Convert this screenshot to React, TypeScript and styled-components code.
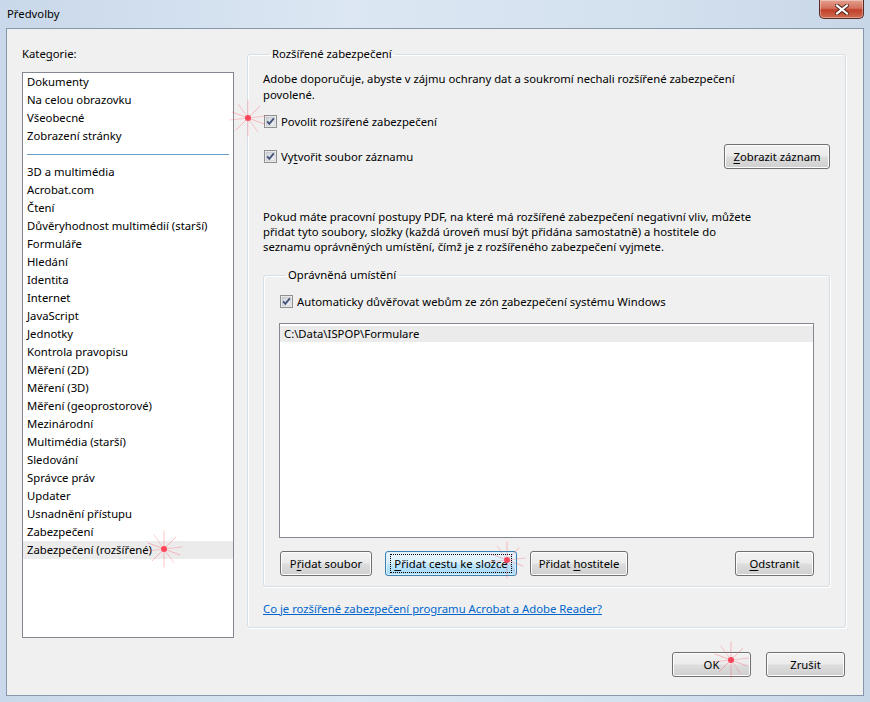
import React, { FC } from "react";
import styled, { createGlobalStyle, css } from "styled-components";

const GlobalStyle = createGlobalStyle`
  html, body {
    margin: 0;
    padding: 0;
    background: #cfdcea;
  }
  body {
    font-family: "Segoe UI", "Noto Sans", "Liberation Sans", sans-serif;
    font-size: 11.3px;
    color: #000;
  }
`;

const Window = styled.div`
  position: relative;
  width: 870px;
  height: 702px;
  box-sizing: border-box;
  display: flex;
  flex-direction: column;
  background: linear-gradient(90deg, #c9d8ea 0%, #dce7f3 40%, #d3e0ee 75%, #c8d7e8 100%);
  overflow: hidden;
`;

const TitleBar = styled.div`
  height: 28px;
  display: flex;
  justify-content: space-between;
  align-items: flex-start;
  flex-shrink: 0;
`;

const Title = styled.div`
  padding: 6px 0 0 7px;
  line-height: 16px;
  color: #000;
`;

const CloseButton = styled.div`
  width: 45px;
  height: 19px;
  margin-right: 6px;
  box-sizing: border-box;
  border: 1px solid #5a2a24;
  border-top: none;
  border-radius: 0 0 5px 5px;
  background: linear-gradient(180deg, #e4a08f 0%, #d2715c 45%, #c2412b 55%, #cf6a50 100%);
  box-shadow: inset 0 0 0 1px rgba(255, 255, 255, 0.35);
  display: flex;
  align-items: center;
  justify-content: center;
`;

const Client = styled.div`
  flex: 1;
  margin: 0 6px 6px 6px;
  box-sizing: border-box;
  background: #f0f0f0;
  border: 1px solid #8797ab;
  padding: 17px 17px 0 15px;
  display: flex;
  flex-direction: column;
`;

const MainRow = styled.div`
  display: flex;
  gap: 13px;
  height: 592px;
`;

const LeftColumn = styled.div`
  width: 212px;
  display: flex;
  flex-direction: column;
`;

const Label = styled.div`
  line-height: 16px;
  height: 16px;
  margin-bottom: 10px;
`;

const Mn = styled.span`
  text-decoration: underline;
  text-underline-offset: 2px;
`;

const ListBox = styled.div<{ $height: number }>`
  box-sizing: border-box;
  height: ${(p) => p.$height}px;
  background: #fff;
  border: 1px solid #828790;
  overflow: hidden;
`;

const ListItem = styled.div<{ $selected?: boolean; $h?: number }>`
  height: ${(p) => p.$h ?? 18}px;
  line-height: ${(p) => p.$h ?? 18}px;
  padding-left: 4px;
  white-space: nowrap;
  ${(p) =>
    p.$selected &&
    css`
      background: #ebebeb;
    `}
`;

const Separator = styled.div`
  height: 18px;
  display: flex;
  align-items: center;
  padding: 0 4px;
  &::after {
    content: "";
    flex: 1;
    height: 1px;
    background: #6a9dc8;
  }
`;

const GroupBox = styled.fieldset<{ $pad: string }>`
  margin: 0;
  box-sizing: border-box;
  border: 1px solid #d5dfe5;
  border-radius: 3px;
  box-shadow: inset 1px 1px 0 #fff, 1px 1px 0 #fff;
  padding: ${(p) => p.$pad};
  min-width: 0;
  display: flex;
  flex-direction: column;
`;

const OuterGroup = styled(GroupBox)`
  flex: 1;
  height: 582px;
`;

const Legend = styled.legend`
  padding: 0 3px;
  margin-left: 6px;
  line-height: 16px;
  height: 16px;
`;

const Paragraph = styled.p<{ $lh: number; $mt: number }>`
  margin: ${(p) => p.$mt}px 0 0 0;
  line-height: ${(p) => p.$lh}px;
`;

const CheckRow = styled.label<{ $mt: number }>`
  display: flex;
  align-items: center;
  gap: 4px;
  height: 16px;
  margin-top: ${(p) => p.$mt}px;
  padding-left: 1px;
  white-space: nowrap;
`;

const SplitRow = styled.div<{ $mt: number }>`
  display: flex;
  align-items: center;
  justify-content: space-between;
  height: 25px;
  margin-top: ${(p) => p.$mt}px;
`;

const Button = styled.div<{ $w: number; $focused?: boolean }>`
  width: ${(p) => p.$w}px;
  height: 25px;
  box-sizing: border-box;
  border: 1px solid #707070;
  border-radius: 3px;
  background: linear-gradient(180deg, #f2f2f2 0%, #ebebeb 48%, #dddddd 52%, #cfcfcf 100%);
  box-shadow: inset 0 0 0 1px #fcfcfc;
  display: flex;
  align-items: center;
  justify-content: center;
  white-space: nowrap;
  flex-shrink: 0;
  ${(p) =>
    p.$focused &&
    css`
      border-color: #3c7fb1;
      background: linear-gradient(180deg, #eaf6fd 0%, #d9f0fc 48%, #bee6fd 52%, #a7d9f5 100%);
      box-shadow: inset 0 0 0 1px #dcf1fc;
    `}
`;

const FocusRect = styled.span`
  padding: 1px 3px;
  outline: 1px dotted #000;
  outline-offset: 0;
`;

const InnerGroup = styled(GroupBox)`
  margin-top: 13px;
  height: 321px;
`;

const PathList = styled(ListBox)`
  margin-top: 14px;
  padding-top: 2px;
`;

const ButtonRow = styled.div`
  display: flex;
  align-items: center;
  gap: 13px;
  margin-top: 13px;
  padding-left: 1px;
`;

const Spacer = styled.div`
  flex: 1;
`;

const Link = styled.a`
  display: block;
  margin-top: 14px;
  line-height: 16px;
  color: #0066cc;
  text-decoration: underline;
  cursor: pointer;
`;

const Footer = styled.div`
  display: flex;
  justify-content: flex-end;
  gap: 15px;
  margin-top: 14px;
  padding-right: 1px;
`;

const Sparkle = styled.svg<{ $x: number; $y: number }>`
  position: absolute;
  left: ${(p) => p.$x - 20}px;
  top: ${(p) => p.$y - 20}px;
  width: 40px;
  height: 40px;
  pointer-events: none;
`;

const CheckBox: FC = () => (
  <svg width="13" height="13" viewBox="0 0 13 13">
    <defs>
      <linearGradient id="cbg" x1="0" y1="0" x2="1" y2="1">
        <stop offset="0" stopColor="#cbcfd5" />
        <stop offset="1" stopColor="#f6f6f6" />
      </linearGradient>
    </defs>
    <rect x="0.5" y="0.5" width="12" height="12" fill="#fff" stroke="#8e8f8f" />
    <rect x="2" y="2" width="9" height="9" fill="url(#cbg)" stroke="#aeb3b9" strokeWidth="0.6" />
    <path d="M3.2 6.4 L5.3 8.8 L9.8 3.4" fill="none" stroke="#3f5178" strokeWidth="1.8" />
  </svg>
);

const Star: FC<{ x: number; y: number }> = ({ x, y }) => (
  <Sparkle $x={x} $y={y} viewBox="0 0 40 40">
    <g stroke="#ff5060" strokeLinecap="round">
      <line x1="20" y1="2" x2="20" y2="38" strokeWidth="0.8" strokeOpacity="0.45" />
      <line x1="4" y1="14" x2="36" y2="26" strokeWidth="0.8" strokeOpacity="0.45" />
      <line x1="8" y1="32" x2="32" y2="8" strokeWidth="0.8" strokeOpacity="0.45" />
      <line x1="10" y1="6" x2="30" y2="34" strokeWidth="0.8" strokeOpacity="0.35" />
      <line x1="2" y1="22" x2="38" y2="18" strokeWidth="0.8" strokeOpacity="0.35" />
    </g>
    <circle cx="20" cy="20" r="3" fill="#ff3048" fillOpacity="0.85" />
  </Sparkle>
);

const topCategories = ["Dokumenty", "Na celou obrazovku", "Všeobecné", "Zobrazení stránky"];

const categories = [
  "3D a multimédia",
  "Acrobat.com",
  "Čtení",
  "Důvěryhodnost multimédií (starší)",
  "Formuláře",
  "Hledání",
  "Identita",
  "Internet",
  "JavaScript",
  "Jednotky",
  "Kontrola pravopisu",
  "Měření (2D)",
  "Měření (3D)",
  "Měření (geoprostorové)",
  "Mezinárodní",
  "Multimédia (starší)",
  "Sledování",
  "Správce práv",
  "Updater",
  "Usnadnění přístupu",
  "Zabezpečení",
  "Zabezpečení (rozšířené)",
];

const App: FC = () => {
  return (
    <>
      <GlobalStyle />
      <Window>
        <TitleBar>
          <Title>Předvolby</Title>
          <CloseButton>
            <svg width="14" height="11" viewBox="0 0 14 11">
              <path
                d="M2 1.5 L12 9.5 M12 1.5 L2 9.5"
                stroke="#4a2018"
                strokeWidth="4"
                strokeLinecap="square"
              />
              <path
                d="M2 1.5 L12 9.5 M12 1.5 L2 9.5"
                stroke="#fff"
                strokeWidth="2.2"
                strokeLinecap="square"
              />
            </svg>
          </CloseButton>
        </TitleBar>
        <Client>
          <MainRow>
            <LeftColumn>
              <Label>
                Kate<Mn>g</Mn>orie:
              </Label>
              <ListBox $height={566}>
                {topCategories.map((c) => (
                  <ListItem key={c}>{c}</ListItem>
                ))}
                <Separator />
                {categories.map((c, i) => (
                  <ListItem key={c} $selected={i === categories.length - 1}>
                    {c}
                  </ListItem>
                ))}
              </ListBox>
            </LeftColumn>

            <OuterGroup $pad="9px 15px 10px 15px">
              <Legend>Rozšířené zabezpečení</Legend>
              <Paragraph $lh={16} $mt={0}>
                Adobe doporučuje, abyste v zájmu ochrany dat a soukromí nechali rozšířené zabezpečení
                <br />
                povolené.
              </Paragraph>
              <CheckRow $mt={11}>
                <CheckBox />
                <span>Povolit rozšířené zabezpečení</span>
              </CheckRow>
              <SplitRow $mt={15}>
                <CheckRow $mt={0}>
                  <CheckBox />
                  <span>
                    Vy<Mn>t</Mn>vořit soubor záznamu
                  </span>
                </CheckRow>
                <Button $w={106}>
                  <span>
                    <Mn>Z</Mn>obrazit záznam
                  </span>
                </Button>
              </SplitRow>
              <Paragraph $lh={15} $mt={40}>
                Pokud máte pracovní postupy PDF, na které má rozšířené zabezpečení negativní vliv, můžete
                <br />
                přidat tyto soubory, složky (každá úroveň musí být přidána samostatně) a hostitele do
                <br />
                seznamu oprávněných umístění, čímž je z rozšířeného zabezpečení vyjmete.
              </Paragraph>

              <InnerGroup $pad="10px 15px 10px 15px">
                <Legend>Oprávněná umístění</Legend>
                <CheckRow $mt={0}>
                  <CheckBox />
                  <span>
                    Automaticky důvěřovat webům ze zón <Mn>z</Mn>abezpečení systému Windows
                  </span>
                </CheckRow>
                <PathList $height={215}>
                  <ListItem $selected $h={16}>
                    C:\Data\ISPOP\Formulare
                  </ListItem>
                </PathList>
                <ButtonRow>
                  <Button $w={92}>
                    <span>
                      P<Mn>ř</Mn>idat soubor
                    </span>
                  </Button>
                  <Button $w={132} $focused>
                    <FocusRect>
                      <Mn>P</Mn>řidat cestu ke složce
                    </FocusRect>
                  </Button>
                  <Button $w={98}>
                    <span>
                      Přidat <Mn>h</Mn>ostitele
                    </span>
                  </Button>
                  <Spacer />
                  <Button $w={79}>
                    <span>
                      <Mn>O</Mn>dstranit
                    </span>
                  </Button>
                </ButtonRow>
              </InnerGroup>

              <Link>Co je rozšířené zabezpečení programu Acrobat a Adobe Reader?</Link>
            </OuterGroup>
          </MainRow>

          <Footer>
            <Button $w={79}>OK</Button>
            <Button $w={79}>Zrušit</Button>
          </Footer>
        </Client>

        <Star x={248} y={118} />
        <Star x={164} y={549} />
        <Star x={507} y={560} />
        <Star x={731} y={660} />
      </Window>
    </>
  );
};

export default App;
